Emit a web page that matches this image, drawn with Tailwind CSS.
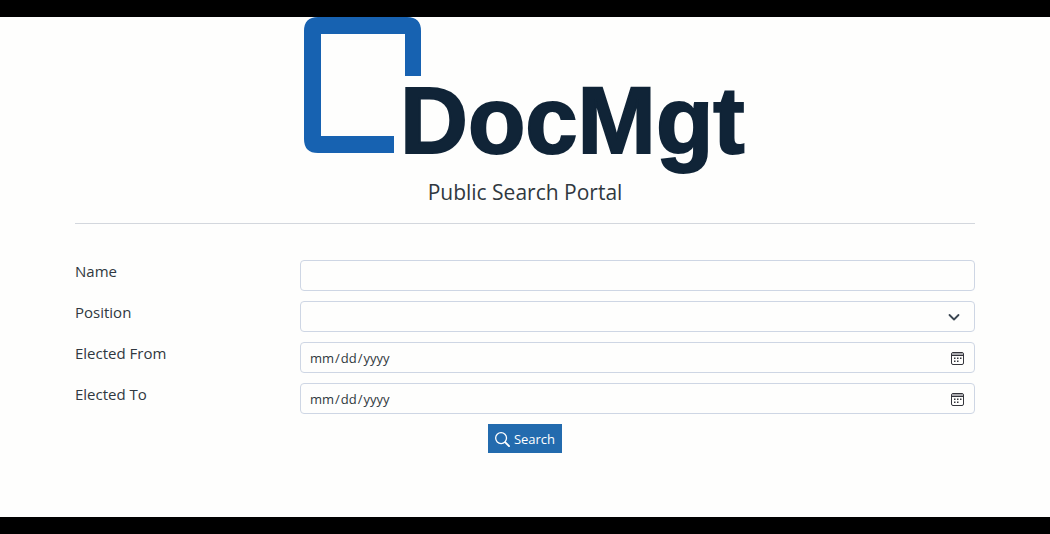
<!DOCTYPE html>
<html lang="en-US">
<head>
    <meta charset="UTF-8">
    <meta name="viewport" content="width=device-width, initial-scale=1.0">
    <script src="https://cdn.jsdelivr.net/npm/@tailwindcss/browser@4"></script>
    <title>Public Search Portal</title>
</head>
<body class="min-h-screen bg-[#fefefd] border-y-[17px] border-black text-[#303840] font-['Open_Sans','Noto_Sans',sans-serif]">
<main class="max-w-[932px] mx-auto px-4">
    <header class="flex flex-col items-center border-b border-[#d3d7dd] pb-3">
        <svg class="w-[442px] h-[156px] overflow-visible" viewBox="0 0 442 156" role="img" aria-label="DocMgt">
            <path fill="#1762b1" d="M14 0H103Q117 0 117 14V59H101V17H17V119H90V136H14Q0 136 0 122V14Q0 0 14 0Z"/>
            <text x="96" y="136" fill="#102437" stroke="#102437" stroke-width="2" class="text-[94px] font-bold font-['Liberation_Sans',sans-serif]">DocMgt</text>
        </svg>
        <h1 class="text-[21px] leading-[38px]">Public Search Portal</h1>
    </header>
    <form id="search-form" class="pt-9 space-y-[10px]">
        <div class="grid grid-cols-4">
            <label for="name" class="text-[15px] leading-[22px]">Name</label>
            <input type="text" id="name" name="name" class="col-span-3 h-[31px] px-2 text-[14px] border border-[#ced6e4] rounded">
        </div>
        <div class="grid grid-cols-4">
            <label for="position" class="text-[15px] leading-[22px]">Position</label>
            <div class="col-span-3 relative">
                <select id="position" name="position" class="block appearance-none w-full h-[31px] px-2 text-[14px] border border-[#ced6e4] rounded">
                    <option value=""></option>
                </select>
                <svg class="absolute right-[15px] top-[10px] size-3 pointer-events-none" viewBox="0 0 12 12" fill="none" stroke="#3b4651" stroke-width="1.8" stroke-linecap="round" stroke-linejoin="round">
                    <path d="M1.5 4L6 8.5L10.5 4"/>
                </svg>
            </div>
        </div>
        <div class="grid grid-cols-4">
            <label for="elected-from" class="text-[15px] leading-[22px]">Elected From</label>
            <div class="col-span-3 relative">
                <input type="date" id="elected-from" name="elected_from" class="block w-full h-[31px] px-2 pt-[2px] text-[13px] border border-[#ced6e4] rounded [&::-webkit-calendar-picker-indicator]:opacity-0">
                <svg class="absolute right-[11px] top-[10px] w-[13px] h-[13px] pointer-events-none" viewBox="0 0 13 13">
                    <rect x="0.5" y="0.5" width="12" height="12" rx="1.5" fill="none" stroke="#33343b"/>
                    <path fill="#a9a9ad" d="M1 1H12V3H1Z"/>
                    <path fill="#33343b" d="M1 3H12V4H1ZM3 5.500H4.500V7H3ZM6 5.500H7.500V7H6ZM9 5.500H10.500V7H9ZM3 8.500H4.500V10H3ZM6 8.500H7.500V10H6Z"/>
                </svg>
            </div>
        </div>
        <div class="grid grid-cols-4">
            <label for="elected-to" class="text-[15px] leading-[22px]">Elected To</label>
            <div class="col-span-3 relative">
                <input type="date" id="elected-to" name="elected_to" class="block w-full h-[31px] px-2 pt-[2px] text-[13px] border border-[#ced6e4] rounded [&::-webkit-calendar-picker-indicator]:opacity-0">
                <svg class="absolute right-[11px] top-[10px] w-[13px] h-[13px] pointer-events-none" viewBox="0 0 13 13">
                    <rect x="0.5" y="0.5" width="12" height="12" rx="1.5" fill="none" stroke="#33343b"/>
                    <path fill="#a9a9ad" d="M1 1H12V3H1Z"/>
                    <path fill="#33343b" d="M1 3H12V4H1ZM3 5.500H4.500V7H3ZM6 5.500H7.500V7H6ZM9 5.500H10.500V7H9ZM3 8.500H4.500V10H3ZM6 8.500H7.500V10H6Z"/>
                </svg>
            </div>
        </div>
        <div class="flex justify-center">
            <button type="submit" class="flex items-center gap-1 h-[29px] px-[7px] pt-[2px] bg-[#236bae] text-white text-[13px]">
                <svg class="size-[15px]" viewBox="0 0 16 16" fill="none" stroke="currentColor" stroke-linecap="round">
                    <circle cx="6.5" cy="6.5" r="5.8" stroke-width="1.4"/>
                    <path d="M11 11L15 15" stroke-width="2"/>
                </svg>
                Search
            </button>
        </div>
    </form>
</main>
</body>
</html>
